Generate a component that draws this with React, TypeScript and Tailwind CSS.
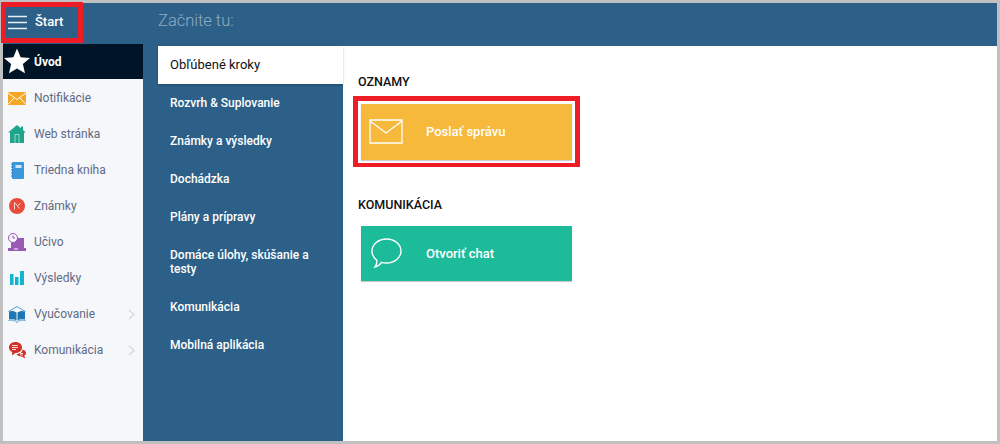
const navItems = [
    { label: "Notifikácie", icon: <MailIcon /> },
    { label: "Web stránka", icon: <HomeIcon /> },
    { label: "Triedna kniha", icon: <BookIcon /> },
    { label: "Známky", icon: <GradeIcon /> },
    { label: "Učivo", icon: <LaptopIcon /> },
    { label: "Výsledky", icon: <BarsIcon /> },
    { label: "Vyučovanie", icon: <OpenBookIcon />, more: true },
    { label: "Komunikácia", icon: <ChatsIcon />, more: true },
]

const tabs = [
    "Rozvrh & Suplovanie",
    "Známky a výsledky",
    "Dochádzka",
    "Plány a prípravy",
    "Domáce úlohy, skúšanie a testy",
    "Komunikácia",
    "Mobilná aplikácia",
]

function MailIcon() {
    return (
        <svg width="18" height="13" viewBox="0 0 18 13">
            <rect width="18" height="13" fill="#f5a623" />
            <path d="M0 1 L9 7.500 L18 1 M0 12.500 L6.500 5.500 M18 12.500 L11.500 5.500" fill="none" stroke="#fff" strokeWidth="1" />
        </svg>
    )
}

function HomeIcon() {
    return (
        <svg width="18" height="18" viewBox="0 0 18 18">
            <path d="M9 0 L13 3.300 V1.500 H15 V5 L18 7.500 L16 7.500 V18 H2 V7.500 H0 Z" fill="#1fa58b" />
            <rect x="6.500" y="9" width="5" height="9" fill="#8fd6c6" />
            <rect x="7.500" y="10" width="3" height="8" fill="#1fa58b" />
        </svg>
    )
}

function BookIcon() {
    return (
        <svg width="13" height="17" viewBox="0 0 13 17">
            <rect x="1" width="12" height="17" rx="1" fill="#3b97dc" />
            <rect x="4.500" y="3" width="6" height="3" fill="#cfe6f7" />
            <path d="M0 2h2M0 5h2M0 8h2M0 11h2M0 14h2" stroke="#2b78b5" strokeWidth="1" />
        </svg>
    )
}

function GradeIcon() {
    return (
        <svg width="16" height="16" viewBox="0 0 16 16">
            <circle cx="8" cy="8" r="8" fill="#e74c3c" />
            <path d="M5.500 11.500 V4.500 L8.500 7.500 L11.500 5.500 M8 7.500 L10.500 10.500" fill="none" stroke="#fbd5d0" strokeWidth="1" />
        </svg>
    )
}

function LaptopIcon() {
    return (
        <svg width="18" height="18" viewBox="0 0 18 18">
            <rect x="3" y="5" width="13" height="10" fill="#9b59b6" />
            <rect x="0" y="15" width="18" height="3" fill="#9b59b6" />
            <rect x="6" y="15.500" width="4" height="1" fill="#fff" />
            <circle cx="5" cy="5" r="4.500" fill="#f5f7fa" stroke="#9b59b6" strokeWidth="1" />
            <path d="M5 2.500 V5 H7" fill="none" stroke="#9b59b6" strokeWidth="1" />
        </svg>
    )
}

function BarsIcon() {
    return (
        <svg width="14" height="14" viewBox="0 0 14 14">
            <rect y="3" width="3.500" height="11" fill="#12b5cf" />
            <rect x="5" y="6" width="3.500" height="8" fill="#12b5cf" />
            <rect x="10" width="4" height="14" fill="#12b5cf" />
        </svg>
    )
}

function OpenBookIcon() {
    return (
        <svg width="18" height="17" viewBox="0 0 18 17">
            <path d="M0.500 5.500 L9 0.500 L17.500 5.500" fill="none" stroke="#4d9ed8" strokeWidth="1" />
            <path d="M1 5.500 C4 4.500 6.500 5 8.500 6.500 V14.500 C6.500 13 4 13 1 13.500 Z M17 5.500 C14 4.500 11.500 5 9.500 6.500 V14.500 C11.500 13 14 13 17 13.500 Z" fill="#1f78b4" />
            <path d="M0.500 14.500 C4 13.500 7 14 9 16.500 C11 14 14 13.500 17.500 14.500" fill="none" stroke="#4d9ed8" strokeWidth="1" />
        </svg>
    )
}

function ChatsIcon() {
    return (
        <svg width="17" height="17" viewBox="0 0 17 17">
            <path d="M6.500 0 C10 0 13 2.200 13 5.500 C13 8.800 10 11 6.500 11 L3 13.500 L3.200 10 C1.200 9 0 7.500 0 5.500 C0 2.200 3 0 6.500 0 Z" fill="#d0322a" />
            <path d="M3 3.500h6M3 5.500h6M3 7.500h4" stroke="#f8d7d4" strokeWidth="1" />
            <path d="M13.500 7.500 C15.500 8 17 9.200 17 11 C17 12.300 16.200 13.200 15.200 13.800 L16.500 16.500 L12.500 14.500 C10 14.500 8.200 13.500 7.500 12 C10.500 12 13.500 10.500 13.500 7.500 Z" fill="#d0322a" />
            <path d="M11 11.500h3M11 13h3" stroke="#f8d7d4" strokeWidth="1" />
        </svg>
    )
}

export default function App() {
    return (
        <div className="relative w-[1000px] h-[444px] bg-[#c0c0c0] p-[3px] font-['Roboto',sans-serif] overflow-hidden">
            <div className="flex flex-col h-full bg-white">
                <header className="flex h-[41px] shrink-0 bg-[#2d6088]">
                    <div className="flex items-center w-[140px] h-full pl-[5px] pb-[3px] text-white">
                        <svg width="19" height="15" viewBox="0 0 19 15" className="mt-[1px]">
                            <path d="M0 1.500h19M0 7.500h19M0 13.500h19" stroke="#e8eef3" strokeWidth="1.600" />
                        </svg>
                        <span className="ml-[8px] text-[13px] font-medium">Štart</span>
                    </div>
                    <div className="pl-[15px] pt-[8px] text-[16.500px] leading-[20px] font-light text-[#8fadc4]">Začnite tu:</div>
                </header>

                <div className="flex flex-1 min-h-0">
                    <nav className="w-[140px] shrink-0 bg-[#f5f7fa] text-[12px] text-[#5f6a85]">
                        <div className="flex items-center h-[35px] bg-[#001427] text-white font-bold">
                            <svg width="26" height="26" viewBox="0 0 26 26" className="ml-[1px] mt-[-1px]">
                                <path d="M13 0.500 L16.600 9.200 L26 10 L18.900 16.100 L21 25.300 L13 20.500 L5 25.300 L7.100 16.100 L0 10 L9.400 9.200 Z" fill="#fff" />
                            </svg>
                            <span className="ml-[4px]">Úvod</span>
                        </div>
                        <div className="pt-[1px]">
                            {navItems.map((item) => (
                                <div key={item.label} className="flex items-center h-[36px]">
                                    <div className="flex justify-center w-[28px] mr-[3px] shrink-0">{item.icon}</div>
                                    <span>{item.label}</span>
                                    {item.more && (
                                        <svg width="7" height="11" viewBox="0 0 7 11" className="ml-auto mr-[8px]">
                                            <path d="M1 1 L6 5.500 L1 10" fill="none" stroke="#d3d6da" strokeWidth="1.200" />
                                        </svg>
                                    )}
                                </div>
                            ))}
                        </div>
                    </nav>

                    <div className="w-[200px] shrink-0 bg-[#2d6088] pt-[2px] pl-[15px] text-[12px] font-medium text-white">
                        <div className="flex items-center h-[38px] pl-[12px] bg-white text-[13px] font-normal text-[#111] shadow-[0_1px_2px_rgba(0,0,0,0.25)]">Obľúbené kroky</div>
                        {tabs.map((tab) => (
                            <div key={tab} className="py-[12px] pl-[12px] pr-[28px] leading-[14px]">{tab}</div>
                        ))}
                    </div>

                    <main className="flex-1 border-t-2 border-[#2d6088] pl-[15px] text-[13px] text-[#111]">
                        <h2 className="mt-[29px] leading-[14px] text-[12.500px] font-medium">OZNAMY</h2>
                        <div className="mt-[7px] mb-[31px] w-[227px] -ml-[5px] border-[5px] border-b-[4px] border-[#ee1c25]">
                            <div className="border-[3px] border-white">
                                <a className="flex items-center h-[56px] bg-[#f6b93b] text-white font-medium shadow-[0_1px_1px_rgba(0,0,0,0.2)]">
                                    <svg width="34" height="25" viewBox="0 0 34 25" className="ml-[8px] mb-[2px]">
                                        <path d="M1 1 H33 V24 H1 Z M1 2 L17 14 L33 2" fill="none" stroke="#fff" strokeWidth="1.300" />
                                    </svg>
                                    <span className="ml-[23px]">Poslať správu</span>
                                </a>
                            </div>
                        </div>
                        <h2 className="leading-[14px] text-[12.500px] font-medium">KOMUNIKÁCIA</h2>
                        <a className="flex items-center mt-[14px] ml-[3px] w-[211px] h-[55px] bg-[#1cbc9b] text-white font-medium shadow-[0_1px_1px_rgba(0,0,0,0.2)]">
                            <svg width="31" height="30" viewBox="0 0 31 30" className="ml-[10px] mb-[2px]">
                                <path d="M15.500 1 C23.500 1 30 6.500 30 13 C30 19.500 23.500 25 15.500 25 C13.500 25 12 24.800 10.500 24.300 C9 26.500 6.500 28.500 4 29 C5.500 27 6 25 5.800 22.300 C2.800 20 1 16.500 1 13 C1 6.500 7.500 1 15.500 1 Z" fill="none" stroke="#fff" strokeWidth="1.400" />
                            </svg>
                            <span className="ml-[24px]">Otvoriť chat</span>
                        </a>
                    </main>
                </div>
            </div>

            <div className="absolute left-[1px] top-[2px] w-[82px] h-[41px] border-[5px] border-[#ee1c25]" />
        </div>
    )
}
